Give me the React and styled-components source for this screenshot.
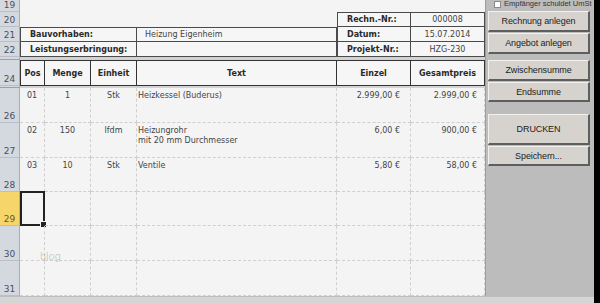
import styled, { createGlobalStyle } from "styled-components";

const GlobalStyle = createGlobalStyle`
  html, body {
    margin: 0;
    padding: 0;
    background: #f4f4f4;
  }
  body {
    width: 600px;
    height: 303px;
    overflow: hidden;
    font-family: "DejaVu Sans", Verdana, sans-serif;
  }
`;

const COLS = "20px 25px 46px 46px 200px 74px 74px";

const items = [
  { n: 26, h: 35, pos: "01", menge: "1", einheit: "Stk", text: ["Heizkessel (Buderus)"], einzel: "2.999,00 €", gesamt: "2.999,00 €" },
  { n: 27, h: 35, pos: "02", menge: "150", einheit: "lfdm", text: ["Heizungrohr", "mit 20 mm Durchmesser"], einzel: "6,00 €", gesamt: "900,00 €" },
  { n: 28, h: 34, pos: "03", menge: "10", einheit: "Stk", text: ["Ventile"], einzel: "5,80 €", gesamt: "58,00 €" },
  { n: 29, h: 34, selected: true },
  { n: 30, h: 35 },
  { n: 31, h: 35 },
];

export default function App() {
  return (
    <Screen>
      <GlobalStyle />
      <Left>
        <Main>
          <Sheet>
            <Row $h={12}>
              <RowHead>19</RowHead>
            </Row>
            <Row $h={15}>
              <RowHead>20</RowHead>
              <Blank style={{ gridColumn: "2 / 6" }} />
              <BoxCell $top $left $bold>Rechn.-Nr.:</BoxCell>
              <BoxCell $top $center>000008</BoxCell>
            </Row>
            <Row $h={15}>
              <RowHead>21</RowHead>
              <BoxCell $top $left $bold style={{ gridColumn: "2 / 5" }}>
                Bauvorhaben:
              </BoxCell>
              <BoxCell $top>Heizung Eigenheim</BoxCell>
              <BoxCell $left $bold>Datum:</BoxCell>
              <BoxCell $center>15.07.2014</BoxCell>
            </Row>
            <Row $h={15}>
              <RowHead>22</RowHead>
              <BoxCell $left $bold style={{ gridColumn: "2 / 5" }}>
                Leistungserbringung:
              </BoxCell>
              <BoxCell />
              <BoxCell $left $bold>Projekt-Nr.:</BoxCell>
              <BoxCell $center>HZG-230</BoxCell>
            </Row>
            <Row $h={3}>
              <RowHead $thin />
              <Gap />
            </Row>
            <Row $h={26}>
              <RowHead>24</RowHead>
              <HeadCell $first>Pos</HeadCell>
              <HeadCell>Menge</HeadCell>
              <HeadCell>Einheit</HeadCell>
              <HeadCell>Text</HeadCell>
              <HeadCell>Einzel</HeadCell>
              <HeadCell>Gesamtpreis</HeadCell>
            </Row>
            <Row $h={2}>
              <RowHead $thin />
              <Gap />
            </Row>
            {items.map((it) => (
              <Row key={it.n} $h={it.h}>
                <RowHead $active={it.selected}>{it.n}</RowHead>
                <GridCell $align="center">
                  {it.pos}
                  {it.selected && (
                    <Selection>
                      <Handle />
                    </Selection>
                  )}
                </GridCell>
                <GridCell $align="center">{it.menge}</GridCell>
                <GridCell $align="center">{it.einheit}</GridCell>
                <GridCell $align="left">
                  {(it.text || []).map((t) => (
                    <div key={t}>{t}</div>
                  ))}
                </GridCell>
                <GridCell $align="right" $pr={10}>{it.einzel}</GridCell>
                <GridCell $align="right" $pr={7}>{it.gesamt}</GridCell>
              </Row>
            ))}
            <Watermark>blog</Watermark>
          </Sheet>
          <Panel>
            <CheckRow>
              <CheckBox />
              <span>Empfänger schuldet UmSt</span>
            </CheckRow>
            <ButtonGroup $mt={3}>
              <Button $h={21}>Rechnung anlegen</Button>
              <Button $h={21}>Angebot anlegen</Button>
            </ButtonGroup>
            <ButtonGroup $mt={6}>
              <Button $h={21}>Zwischensumme</Button>
              <Button $h={20}>Endsumme</Button>
            </ButtonGroup>
            <ButtonGroup $mt={12}>
              <Button $h={31}>DRUCKEN</Button>
              <Button $h={20}>Speichern...</Button>
            </ButtonGroup>
          </Panel>
        </Main>
        <BottomBar />
      </Left>
      <Edge />
    </Screen>
  );
}

const Screen = styled.div`
  display: flex;
  width: 600px;
  height: 303px;
`;

const Left = styled.div`
  flex: 1;
  display: flex;
  flex-direction: column;
`;

const Main = styled.div`
  display: flex;
  height: 296px;
`;

const Sheet = styled.div`
  position: relative;
  width: 485px;
  display: flex;
  flex-direction: column;
  background: #f4f4f4;
  color: #333;
  font-size: 8px;
`;

const Row = styled.div`
  display: grid;
  grid-template-columns: ${COLS};
  height: ${(p) => p.$h}px;
`;

const RowHead = styled.div`
  grid-column: 1;
  box-sizing: border-box;
  display: flex;
  align-items: flex-end;
  justify-content: center;
  padding-bottom: 1px;
  background: ${(p) => (p.$active ? "#f6d56b" : "#d4d9e0")};
  border-right: 1px solid #a8aeb8;
  border-bottom: 1px solid ${(p) => (p.$thin ? "#9aa0aa" : "#b9bfc8")};
  color: ${(p) => (p.$active ? "#6a5a22" : "#4a4f57")};
  font-size: 9px;
  line-height: 10px;
  overflow: hidden;
`;

const Blank = styled.div``;

const Gap = styled.div`
  grid-column: 2 / 8;
  background: #d2d2d2;
`;

const BoxCell = styled.div`
  box-sizing: border-box;
  display: flex;
  align-items: center;
  justify-content: ${(p) => (p.$center ? "center" : "flex-start")};
  padding-left: ${(p) => (p.$center ? 0 : p.$bold ? 9 : 8)}px;
  border-right: 1px solid #4a4a4a;
  border-bottom: 1px solid #4a4a4a;
  border-top: ${(p) => (p.$top ? "1px solid #4a4a4a" : "none")};
  border-left: ${(p) => (p.$left ? "1px solid #4a4a4a" : "none")};
  font-weight: ${(p) => (p.$bold ? 700 : 400)};
  color: ${(p) => (p.$bold ? "#2a2a2a" : "#444")};
  white-space: nowrap;
  background: #f6f6f6;
`;

const HeadCell = styled.div`
  box-sizing: border-box;
  display: flex;
  align-items: center;
  justify-content: center;
  border-top: 1px solid #333;
  border-bottom: 1px solid #333;
  border-right: 1px solid #333;
  border-left: ${(p) => (p.$first ? "1px solid #333" : "none")};
  font-weight: 700;
  color: #2a2a2a;
  background: #f6f6f6;
`;

const GridCell = styled.div`
  position: relative;
  box-sizing: border-box;
  padding: 3px ${(p) => p.$pr || 0}px 0 ${(p) => (p.$align === "left" ? 1 : 0)}px;
  text-align: ${(p) => p.$align};
  line-height: 10px;
  color: #444;
  border-right: 1px dashed #cfcfcf;
  border-bottom: 1px dashed #cfcfcf;
  white-space: nowrap;
`;

const Selection = styled.div`
  position: absolute;
  left: 0;
  top: -1px;
  right: -1px;
  bottom: -1px;
  border: 2px solid #222;
`;

const Handle = styled.div`
  position: absolute;
  right: -4px;
  bottom: -4px;
  width: 5px;
  height: 5px;
  background: #222;
  border: 1px solid #f4f4f4;
`;

const Watermark = styled.div`
  position: absolute;
  left: 40px;
  top: 250px;
  font-size: 11px;
  color: rgba(0, 0, 0, 0.18);
  font-family: "Liberation Sans", Arial, sans-serif;
`;

const Panel = styled.div`
  width: 109px;
  box-sizing: border-box;
  padding-left: 2px;
  background: #bcbcbc;
  border-left: 1px solid #9c9c9c;
  display: flex;
  flex-direction: column;
  font-family: "Liberation Sans", Arial, sans-serif;
`;

const CheckRow = styled.div`
  display: flex;
  align-items: flex-end;
  gap: 3px;
  height: 8px;
  padding-left: 6px;
  font-size: 7.5px;
  line-height: 8px;
  color: #333;
  overflow: hidden;
  white-space: nowrap;
`;

const CheckBox = styled.div`
  width: 7px;
  height: 7px;
  box-sizing: border-box;
  background: #fff;
  border: 1px solid #8a8a8a;
  flex-shrink: 0;
`;

const ButtonGroup = styled.div`
  display: flex;
  flex-direction: column;
  gap: 1px;
  margin-top: ${(p) => p.$mt}px;
`;

const Button = styled.div`
  box-sizing: border-box;
  width: 102px;
  height: ${(p) => p.$h}px;
  display: flex;
  align-items: center;
  justify-content: center;
  background: #d6d3ce;
  border-top: 1px solid #f2f1ee;
  border-left: 1px solid #f2f1ee;
  border-right: 2px solid #5e5e5e;
  border-bottom: 2px solid #5e5e5e;
  font-size: 9px;
  color: #222;
  letter-spacing: -0.1px;
  white-space: nowrap;
`;

const BottomBar = styled.div`
  flex: 1;
  background: #d5d5d5;
  border-top: 1px solid #bdbdbd;
`;

const Edge = styled.div`
  width: 6px;
  background: #000;
`;
